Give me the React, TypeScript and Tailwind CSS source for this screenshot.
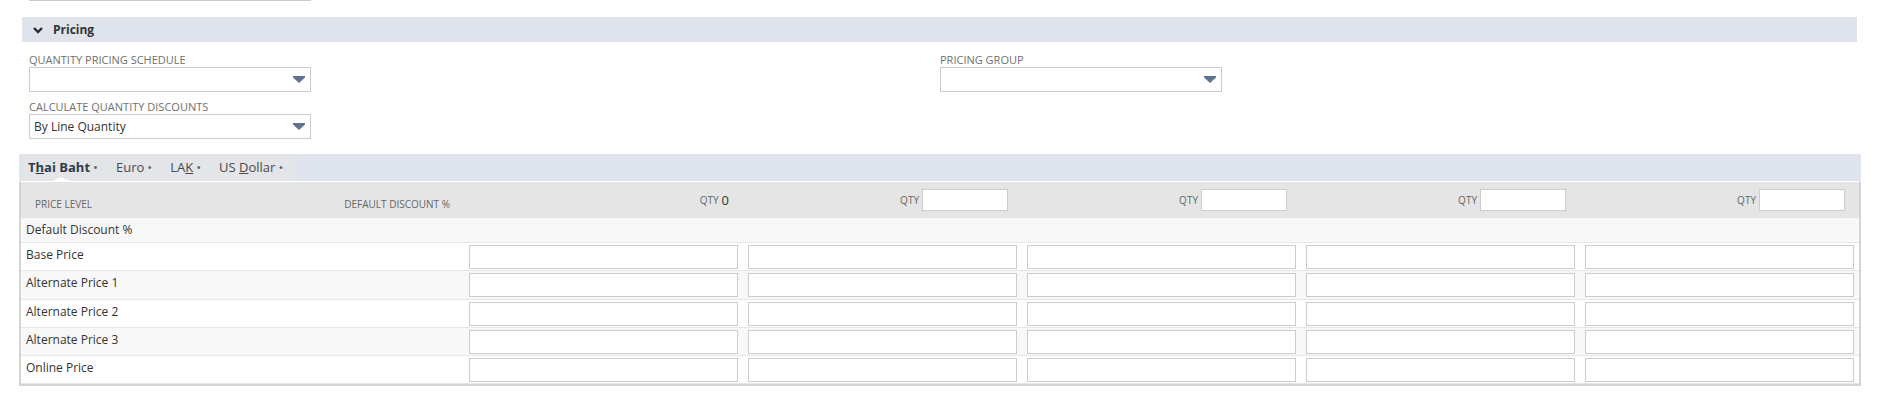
import React from "react";

const DropArrow = () => (
  <svg width="12" height="7" viewBox="0 0 12 7" className="shrink-0">
    <polygon points="0,0 12,0 12,1.5 6,7 0,1.5" fill="#5f7391" />
  </svg>
);

const Select = ({ value }: { value?: string }) => (
  <div className="w-[282px] h-[25px] border border-[#cccccc] bg-white flex items-center justify-between pl-[4px] pr-[5px]">
    <span className="text-[12px] text-[#333]">{value}</span>
    <DropArrow />
  </div>
);

const Label = ({ children }: { children: React.ReactNode }) => (
  <div className="h-[14px] text-[11px] leading-[14px] text-[#6f6f6f] uppercase">{children}</div>
);

const tabs = [
  { pre: "T", u: "h", post: "ai Baht", active: true },
  { pre: "Euro", u: "", post: "", active: false },
  { pre: "LA", u: "K", post: "", active: false },
  { pre: "US ", u: "D", post: "ollar", active: false },
];

const rows = ["Base Price", "Alternate Price 1", "Alternate Price 2", "Alternate Price 3", "Online Price"];

export default function App() {
  return (
    <div className="w-[1882px] h-[405px] bg-white overflow-hidden font-['Open_Sans',sans-serif] text-[#333]">
      <div className="ml-[29px] w-[282px] h-px bg-[#cccccc]" />

      {/* section header */}
      <div className="ml-[22px] mt-[16px] w-[1835px] h-[25px] bg-[#dfe3eb] flex items-center">
        <svg width="12" height="8" viewBox="0 0 12 8" className="ml-[10px]">
          <polyline points="2,2 6,6 10,2" fill="none" stroke="#2b2b2b" strokeWidth="2.4" />
        </svg>
        <span className="ml-[9px] text-[12px] font-bold text-[#333]">Pricing</span>
      </div>

      {/* fields */}
      <div className="flex ml-[29px] mt-[11px]">
        <div className="w-[282px]">
          <Label>Quantity Pricing Schedule</Label>
          <Select />
          <div className="mt-[8px]">
            <Label>Calculate Quantity Discounts</Label>
            <Select value="By Line Quantity" />
          </div>
        </div>
        <div className="ml-[629px] w-[282px]">
          <Label>Pricing Group</Label>
          <Select />
        </div>
      </div>

      {/* currency tabs */}
      <div className="ml-[19px] mt-[15px] w-[1842px] h-[27px] bg-[#dfe4ed] flex">
        <div className="h-full bg-[#e3e5e9] flex items-center pr-[3px]">
          {tabs.map((t) => (
            <div key={t.pre} className="relative h-full flex items-center px-[9px]">
              <span className={`text-[13px] ${t.active ? "font-bold text-[#2f3b4a]" : "text-[#4a4a4a]"}`}>
                {t.pre}
                {t.u && <span className="underline">{t.u}</span>}
                {t.post}
              </span>
              <span className="ml-[3px] text-[13px] text-[#666]">•</span>
              {t.active && (
                <span className="absolute bottom-0 left-[33px] w-0 h-0 border-x-[9px] border-x-transparent border-b-[4px] border-b-white" />
              )}
            </div>
          ))}
        </div>
      </div>

      {/* price table */}
      <div className="ml-[19px] w-[1842px] border-x-2 border-b-2 border-[#d4d4d4] border-t border-t-white">
        <div className="h-[36px] bg-[#e5e5e5] flex text-[#666]">
          <div className="w-[220px] pl-[14px] pt-[15px] text-[10px] uppercase">Price Level</div>
          <div className="w-[223px] pr-[14px] pt-[15px] text-[10px] uppercase text-right">Default Discount %</div>
          {[0, 1, 2, 3, 4].map((i) => (
            <div key={i} className="w-[279px] flex justify-end items-center pr-[14px]">
              <span className="text-[10px] text-[#666] mr-[3px]">QTY</span>
              {i === 0 ? (
                <span className="text-[13px] text-[#333] pt-[2px]">0</span>
              ) : (
                <div className="w-[86px] h-[22px] bg-white border border-[#cccccc]" />
              )}
            </div>
          ))}
        </div>

        <div className="h-[25px] bg-[#f8f8f8] border-b border-[#e6e6e6] pl-[5px] pt-[3px] text-[12px]">
          Default Discount %
        </div>

        {rows.map((r, idx) => (
          <div
            key={r}
            className={`flex border-b border-[#e6e6e6] ${idx === 1 ? "h-[29px]" : "h-[28px]"} ${
              idx % 2 === 1 ? "bg-[#f8f8f8]" : "bg-white"
            }`}
          >
            <div className="w-[443px] pl-[5px] pt-[3px] text-[12px]">{r}</div>
            {[0, 1, 2, 3, 4].map((i) => (
              <div key={i} className="w-[279px] pl-[5px] pt-[2px]">
                <div className="w-[269px] h-[24px] bg-white border border-[#cccccc]" />
              </div>
            ))}
          </div>
        ))}
      </div>
    </div>
  );
}
